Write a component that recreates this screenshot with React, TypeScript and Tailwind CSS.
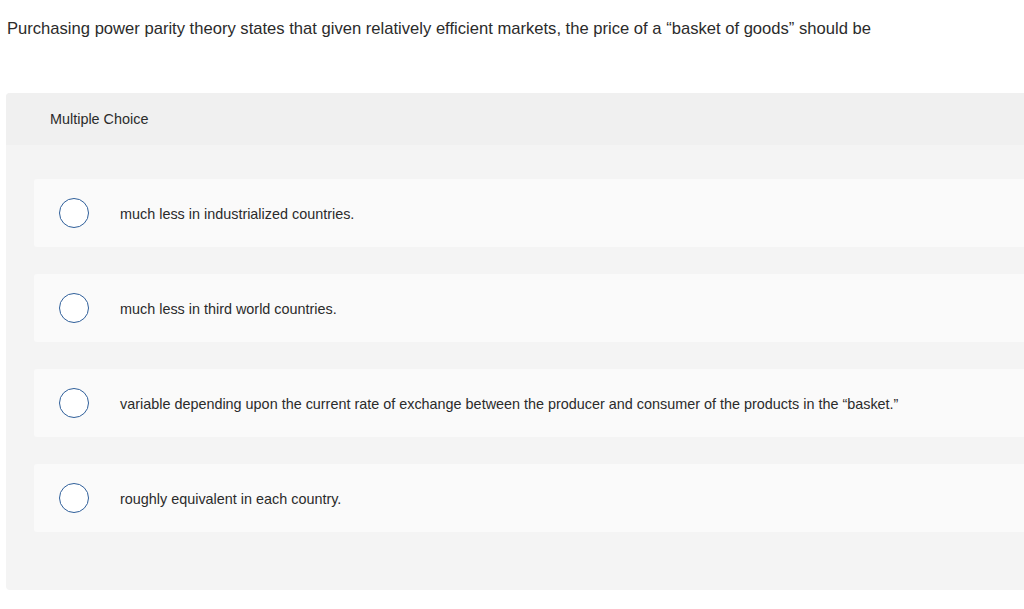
const options = [
  "much less in industrialized countries.",
  "much less in third world countries.",
  "variable depending upon the current rate of exchange between the producer and consumer of the products in the \u201cbasket.\u201d",
  "roughly equivalent in each country.",
];

export default function App() {
  return (
    <div className="min-h-[609px] bg-white text-[#2b2b2b] font-['Liberation_Sans',Arial,sans-serif]">
      <p className="pl-[7px] pt-[19px] text-[16.6px] leading-[20px]">
        Purchasing power parity theory states that given relatively efficient markets, the price of a &ldquo;basket of goods&rdquo; should be
      </p>

      <div className="mt-[54px] ml-[6px] rounded-l-[4px] bg-[#f4f4f4] overflow-hidden">
        <div className="h-[52px] flex items-center pl-[44px] pt-[2px] bg-[#f0f0f0] text-[14.4px]">
          Multiple Choice
        </div>
        <div className="flex flex-col gap-[27px] pt-[34px] pb-[58px] pl-[28px]">
          {options.map((opt) => (
            <div key={opt} className="h-[68px] flex items-center pl-[25px] bg-[#fafafa] rounded-l-[3px]">
              <span className="w-[30px] h-[30px] rounded-full border border-[#2f5f9a] bg-white shrink-0" />
              <span className="ml-[31px] pt-[4px] text-[14.4px]">{opt}</span>
            </div>
          ))}
        </div>
      </div>
    </div>
  );
}
